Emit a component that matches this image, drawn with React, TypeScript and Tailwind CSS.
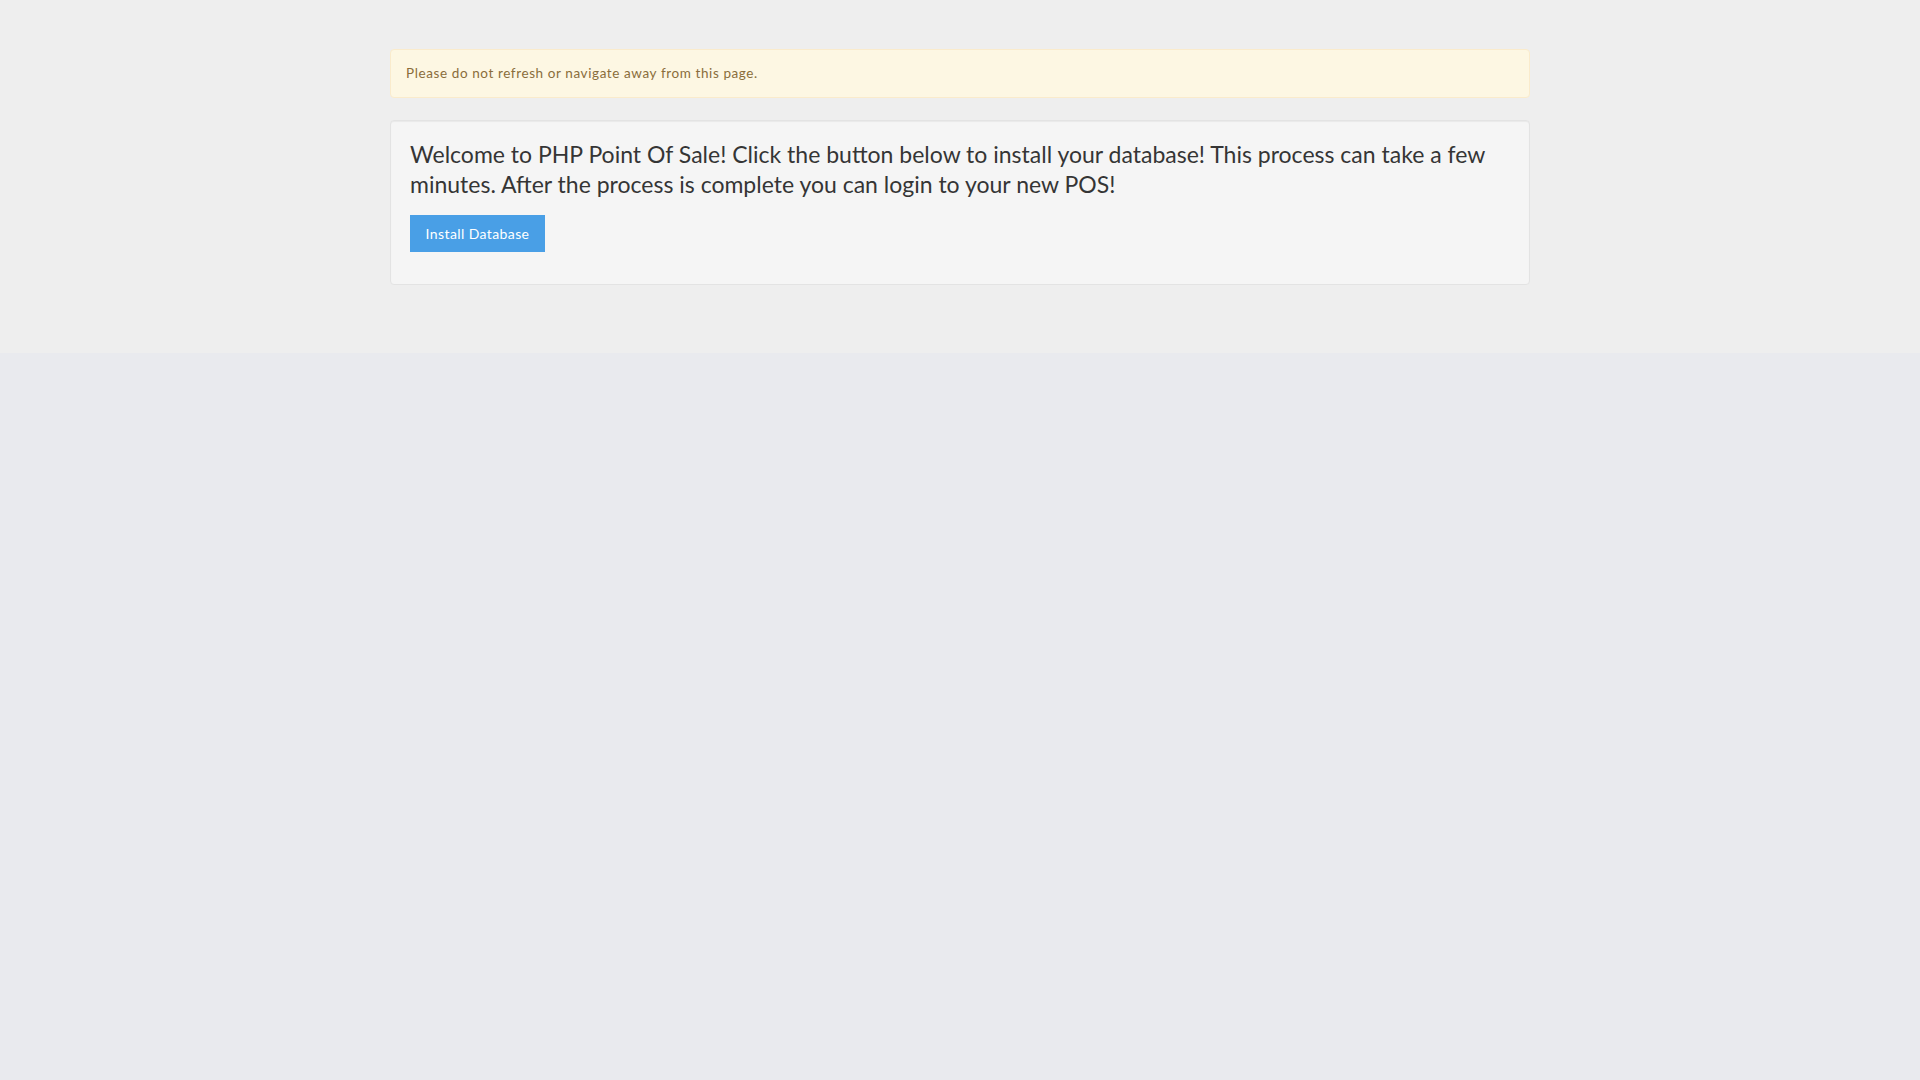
import React from 'react';

export default function App() {
  return (
    <div className="min-h-screen bg-[#e9eaee] font-['Lato','Open_Sans',sans-serif]">
      {/* Top install area */}
      <div className="bg-[#eeeeee] pt-[49px] pb-[68px]">
        <div className="mx-auto w-[1140px]">
          <div className="h-[49px] rounded border border-[#faebcc] bg-[#fdf7e3] px-[15px] flex items-center text-[13.5px] text-[#8a6d3b] tracking-[0.6px]">
            Please do not refresh or navigate away from this page.
          </div>

          <div className="mt-[22px] h-[165px] rounded border border-[#e3e3e3] bg-[#f5f5f5] px-[19px] pt-[18px] shadow-[inset_0_1px_1px_rgba(0,0,0,0.05)]">
            <p className="text-[23px] leading-[30px] text-[#353535]">
              Welcome to PHP Point Of Sale! Click the button below to install your database! This process can take a few minutes. After the process is complete you can login to your new POS!
            </p>
            <button className="mt-[16px] h-[37px] w-[135px] bg-[#499fe6] text-[14px] text-white tracking-[0.4px]">
              Install Database
            </button>
          </div>
        </div>
      </div>
    </div>
  );
}
